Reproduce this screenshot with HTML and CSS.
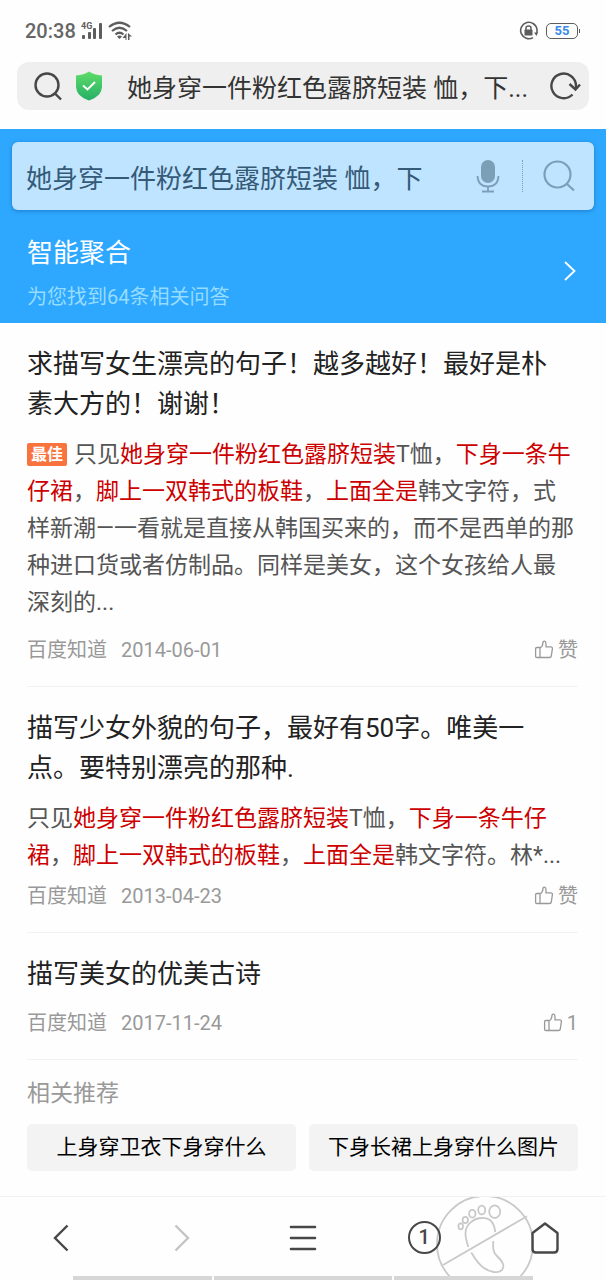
FILE: index.html
```html
<!DOCTYPE html>
<html lang="zh-CN">
<head>
    <meta charset="UTF-8">
    <meta name="viewport" content="width=device-width, initial-scale=1.0">
    <title>智能聚合</title>
    <link rel="stylesheet" href="styles.css">
</head>
<body>

<svg class="defs" aria-hidden="true">
    <symbol id="thumb" viewBox="0 0 20 20">
        <path d="M2.8 7.500H6V17.500H2.800Q1.600 17.500 1.600 16.300V8.700Q1.600 7.500 2.800 7.500ZM6 8Q8.800 6.400 8.900 3Q9 1 10.600 1.200Q12 1.500 12 4V6.900H16.800Q18.600 7 18.400 8.600L17.300 16Q17 17.500 15.600 17.500H6" fill="none" stroke="#999" stroke-width="1.300" stroke-linejoin="round"/>
    </symbol>
</svg>

<header class="browser">
    <div class="status">
        <span class="time">20:38</span>
        <svg class="signal" width="22" height="20" viewBox="0 0 22 20">
            <text x="0" y="8" class="net">4G</text>
            <g fill="#5d5d5d">
                <rect x="1" y="14" width="3" height="4" rx="1"/>
                <rect x="7" y="11" width="3" height="7" rx="1"/>
                <rect x="12" y="7" width="3" height="11" rx="1"/>
                <rect x="18" y="2" width="3" height="16" rx="1"/>
            </g>
        </svg>
        <svg width="25" height="20" viewBox="0 0 25 20">
            <g fill="none" stroke="#5d5d5d" stroke-width="2.200">
                <path d="M1 6Q11.500 -2.500 22 6"/>
                <path d="M4 10Q11.500 3.500 19 10"/>
                <path d="M7.500 13.500Q11.500 10 15.500 13.500"/>
            </g>
            <path d="M9 15.500Q11.500 13.500 14 15.500L11.500 18ZM18.500 12V19H17.500V17H14.500ZM20 12L24 15.500H21.500V19H20Z" fill="#5d5d5d"/>
        </svg>
        <span class="spacer"></span>
        <svg width="20" height="20" viewBox="0 0 20 20">
            <path d="M14 16.600A8.200 8.200 0 1 1 18 8.500V12" fill="none" stroke="#5d5d5d" stroke-width="1.600"/>
            <path d="M15 11.500H19L17.500 15Z" fill="#5d5d5d"/>
            <rect x="5.500" y="8.500" width="8" height="6" rx="0.500" fill="#5d5d5d"/>
            <path d="M7 9V7Q7 5 9.500 5Q12 5 12 7V9" fill="none" stroke="#5d5d5d" stroke-width="1.500"/>
        </svg>
        <span class="battery">55</span>
    </div>
    <div class="address">
        <svg width="28" height="30" viewBox="0 0 28 30" fill="none" stroke="#474747" stroke-width="2.400">
            <circle cx="13" cy="14" r="11.500"/>
            <path d="M20.500 22L27 28.500"/>
        </svg>
        <svg width="28" height="30" viewBox="0 0 28 30">
            <defs>
                <linearGradient id="shield" x1="0" y1="0" x2="0" y2="1">
                    <stop offset="0" stop-color="#5fdc68"/>
                    <stop offset="1" stop-color="#25ae66"/>
                </linearGradient>
            </defs>
            <path d="M14 0.500Q19 4 27 4.500V15Q27 25 14 29.500Q1 25 1 15V4.500Q9 4 14 0.500Z" fill="url(#shield)"/>
            <path d="M8 14.500L12.500 18.500L20 11" fill="none" stroke="#fff" stroke-width="2"/>
        </svg>
        <input class="url" type="text" aria-label="网址" value="她身穿一件粉红色露脐短装 恤，下...">
        <button class="icon-btn" type="button" aria-label="刷新">
            <svg width="32" height="30" viewBox="0 0 32 30" fill="none" stroke="#474747" stroke-width="2.400">
                <path d="M23.500 23.500A12.300 12.300 0 1 1 27 15V17"/>
                <path d="M20.500 13L26.500 18.500L31 13.500"/>
            </svg>
        </button>
    </div>
</header>

<section class="banner">
    <form class="search">
        <input class="query" type="text" aria-label="搜索" value="她身穿一件粉红色露脐短装 恤，下">
        <button class="icon-btn mic" type="button" aria-label="语音">
            <svg width="24" height="34" viewBox="0 0 24 34">
                <rect x="5" y="1" width="14" height="23" rx="7" fill="#7c9fb8"/>
                <path d="M1.500 17Q2 27.500 12 27.500Q22 27.500 22.500 17M12 27.500V32M6 32.500H18" fill="none" stroke="#7c9fb8" stroke-width="1.800"/>
            </svg>
        </button>
        <button class="icon-btn go" type="submit" aria-label="搜索">
            <svg width="32" height="32" viewBox="0 0 32 32" fill="none" stroke="#7c9fb8" stroke-width="2.200">
                <circle cx="14.500" cy="14.500" r="13"/>
                <path d="M24 24L31 30.500"/>
            </svg>
        </button>
    </form>
    <a class="gather" href="#">
        <span class="gather-text">
            <strong>智能聚合</strong>
            <small>为您找到64条相关问答</small>
        </span>
        <svg width="12" height="20" viewBox="0 0 12 20" fill="none" stroke="#fff" stroke-width="1.800">
            <path d="M1 1L10.500 10L1 19"/>
        </svg>
    </a>
</section>

<main class="results">
    <article class="item">
        <h2><a href="#">求描写女生漂亮的句子！越多越好！最好是朴<br>素大方的！谢谢！</a></h2>
        <p class="desc"><span class="best">最佳</span>只见<em>她身穿一件粉红色露脐短装</em>T恤，<em>下身一条牛仔裙</em>，<em>脚上一双韩式的板鞋</em>，<em>上面全是</em>韩文字符，式样新潮—一看就是直接从韩国买来的，而不是西单的那种进口货或者仿制品。同样是美女，这个女孩给人最深刻的...</p>
        <div class="meta">
            <span>百度知道</span><span>2014-06-01</span>
            <button class="like" type="button"><svg width="20" height="20"><use href="#thumb"/></svg>赞</button>
        </div>
    </article>
    <article class="item">
        <h2><a href="#">描写少女外貌的句子，最好有50字。唯美一<br>点。要特别漂亮的那种.</a></h2>
        <p class="desc short">只见<em>她身穿一件粉红色露脐短装</em>T恤，<em>下身一条牛仔裙</em>，<em>脚上一双韩式的板鞋</em>，<em>上面全是</em>韩文字符。林*...</p>
        <div class="meta">
            <span>百度知道</span><span>2013-04-23</span>
            <button class="like" type="button"><svg width="20" height="20"><use href="#thumb"/></svg>赞</button>
        </div>
    </article>
    <article class="item">
        <h2><a href="#">描写美女的优美古诗</a></h2>
        <div class="meta">
            <span>百度知道</span><span>2017-11-24</span>
            <button class="like" type="button"><svg width="20" height="20"><use href="#thumb"/></svg>1</button>
        </div>
    </article>
    <section class="related">
        <h3>相关推荐</h3>
        <div class="tags">
            <a href="#">上身穿卫衣下身穿什么</a>
            <a href="#">下身长裙上身穿什么图片</a>
        </div>
    </section>
</main>

<nav class="toolbar">
    <!-- footprint toggle behind the last two buttons -->
    <svg class="footprint" width="98" height="84" viewBox="0 0 98 84" fill="none" stroke="#c9c9c9" stroke-width="1.800">
        <circle cx="49" cy="47" r="48"/>
        <path d="M7 68L91 19.300"/>
        <ellipse cx="24.700" cy="29.300" rx="2.300" ry="3"/>
        <ellipse cx="29.300" cy="23" rx="2.700" ry="3.200"/>
        <ellipse cx="36.300" cy="16.700" rx="3.200" ry="3.900"/>
        <ellipse cx="45.700" cy="13" rx="3.500" ry="4.400"/>
        <ellipse cx="58.700" cy="14.700" rx="5.500" ry="6.300"/>
        <path d="M32.300 50C30 42 27 34 33 27C38 21 48 19 54 23C59 27 58.500 32 59.300 35"/>
        <path d="M57.300 44C57 50 56.500 55 61 59C67 65 69 69 66 73C62 77 54 75 48 71C42 67 38 60 35.300 55.500"/>
    </svg>
    <button type="button" aria-label="后退">
        <svg width="16" height="28" viewBox="0 0 16 28" fill="none" stroke="#474747" stroke-width="2.400"><path d="M14.500 1.500L2 14L14.500 26.500"/></svg>
    </button>
    <button type="button" aria-label="前进">
        <svg width="16" height="28" viewBox="0 0 16 28" fill="none" stroke="#c4c4c4" stroke-width="2.400"><path d="M1.500 1.500L14 14L1.500 26.500"/></svg>
    </button>
    <button type="button" aria-label="菜单">
        <svg width="28" height="28" viewBox="0 0 28 28" stroke="#474747" stroke-width="2.600" stroke-linecap="round"><path d="M2 3H26M2 14H26M2 25H26"/></svg>
    </button>
    <button type="button" aria-label="窗口">
        <span class="count">1</span>
    </button>
    <button type="button" aria-label="主页">
        <svg width="28" height="32" viewBox="0 0 28 32" fill="none" stroke="#474747" stroke-width="2.400" stroke-linejoin="round"><path d="M1.500 11L14 1.500L26.500 11V27Q26.500 30.500 23 30.500H5Q1.500 30.500 1.500 27Z"/></svg>
    </button>
    <div class="gesture"><i></i><i class="wide"></i><i></i></div>
</nav>

</body>
</html>
```

FILE: styles.css
```css
* {
    box-sizing: border-box;
}
body {
    margin: 0;
    min-height: 100vh;
    display: flex;
    flex-direction: column;
    background: #fefefe;
    color: #222;
    font-family: Roboto, "Noto Sans CJK SC", sans-serif;
}
a {
    color: inherit;
    text-decoration: none;
}
button {
    padding: 0;
    border: 0;
    background: none;
    color: inherit;
    font: inherit;
    cursor: pointer;
}
input {
    min-width: 0;
    padding: 0;
    border: 0;
    outline: 0;
    background: none;
    font: inherit;
}
svg {
    display: block;
    flex: none;
}
.defs {
    position: absolute;
    width: 0;
    height: 0;
}
.icon-btn {
    display: flex;
}

/* status bar and address bar */
.browser {
    padding: 0 17px 19px;
}
.status {
    display: flex;
    align-items: center;
    height: 62px;
    padding: 0 11px 0 8px;
    gap: 5px;
}
.time {
    font-size: 20px;
    font-weight: 500;
    color: #666;
}
.net {
    font-size: 9px;
    font-weight: 700;
    fill: #5d5d5d;
}
.spacer {
    flex: 1;
}
.battery {
    position: relative;
    width: 32px;
    margin-left: 2px;
    border: 1px solid #5d5d5d;
    border-radius: 5px;
    font-size: 13px;
    font-weight: 700;
    line-height: 14px;
    text-align: center;
    color: #3a8be8;
}
.battery::after {
    content: "";
    position: absolute;
    top: 5px;
    right: -3px;
    width: 1px;
    height: 4px;
    background: #5d5d5d;
}
.address {
    display: flex;
    align-items: center;
    height: 48px;
    padding: 0 8px 0 17px;
    border-radius: 12px;
    background: #efefef;
    gap: 13px;
}
.url {
    flex: 1;
    margin-left: 11px;
    font-size: 25px;
    color: #333;
}

/* blue search banner */
.banner {
    padding: 13px 12px 0;
    background: #2ea8ff;
    color: #fff;
}
.search {
    display: flex;
    align-items: center;
    height: 68px;
    padding: 0 19px 0 14px;
    border-radius: 6px;
    background: #bfe4ff;
    box-shadow: 0 1px 4px rgba(0, 60, 120, 0.4);
}
.query {
    flex: 1;
    font-size: 26px;
    color: #355a78;
}
.mic {
    padding-right: 22px;
}
.go {
    padding-left: 20px;
    border-left: 1px dotted #7c9fb8;
}
.gather {
    display: flex;
    align-items: center;
    justify-content: space-between;
    height: 113px;
    padding: 8px 18px 0 15px;
}
.gather-text {
    display: flex;
    flex-direction: column;
    gap: 10px;
    padding-top: 2px;
}
.gather strong {
    font-size: 26px;
    font-weight: 400;
    line-height: 40px;
}
.gather small {
    font-size: 20px;
    line-height: 28px;
    color: #96dcff;
}

/* results */
.results {
    padding: 0 28px 0 27px;
}
.item {
    padding: 21px 0 22px;
    border-bottom: 1px solid #f2f2f2;
}
.item h2 {
    margin: 0;
    font-size: 26px;
    font-weight: 400;
    line-height: 40px;
}
.desc {
    margin: 12px 0 15px;
    font-size: 23px;
    line-height: 37px;
    color: #555;
}
.desc.short {
    margin-bottom: 8px;
}
.desc em {
    font-style: normal;
    color: #c00;
}
.best {
    display: inline-block;
    margin-right: 7px;
    padding: 0 4px;
    border-radius: 2px;
    background: #f9733e;
    color: #fff;
    font-size: 16px;
    font-weight: 700;
    line-height: 23px;
    vertical-align: 2px;
}
.meta {
    display: flex;
    align-items: center;
    height: 28px;
    gap: 14px;
    font-size: 20px;
    line-height: 28px;
    color: #999;
}
h2 + .meta {
    margin-top: 15px;
}
.like {
    display: flex;
    align-items: center;
    gap: 4px;
    margin-left: auto;
}
.related {
    padding: 17px 0 24px;
}
.related h3 {
    margin: 0 0 13px;
    font-size: 23px;
    font-weight: 400;
    line-height: 34px;
    color: #999;
}
.tags {
    display: grid;
    grid-template-columns: 1fr 1fr;
    gap: 13px;
}
.tags a {
    border-radius: 5px;
    background: #f3f3f3;
    color: #000;
    font-size: 21px;
    line-height: 47px;
    text-align: center;
    white-space: nowrap;
}

/* bottom toolbar */
.toolbar {
    position: relative;
    display: grid;
    grid-template-columns: repeat(5, 1fr);
    height: 84px;
    margin-top: auto;
    padding-bottom: 2px;
    border-top: 1px solid #f2f2f2;
    overflow: hidden;
}
.toolbar button {
    position: relative;
    display: flex;
    align-items: center;
    justify-content: center;
}
.footprint {
    position: absolute;
    top: 0;
    left: 72%;
}
.count {
    width: 33px;
    border: 2px solid #474747;
    border-radius: 50%;
    font-size: 20px;
    font-weight: 500;
    line-height: 29px;
    color: #474747;
}
.gesture {
    position: absolute;
    bottom: 0;
    left: 12%;
    right: 12%;
    display: flex;
    gap: 2px;
}
.gesture i {
    flex: 141;
    height: 4px;
    background: #d6d6d6;
}
.gesture .wide {
    flex: 179;
}
```
